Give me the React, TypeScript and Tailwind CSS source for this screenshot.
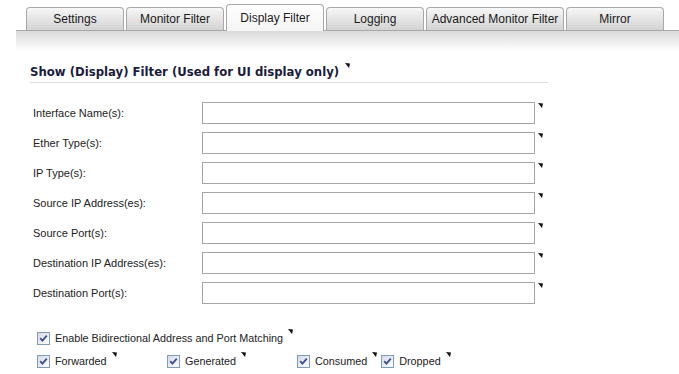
import React from "react";

const tabs = [
  { label: "Settings", w: "w-[98px]" },
  { label: "Monitor Filter", w: "w-[98px]" },
  { label: "Display Filter", w: "w-[98px]", active: true },
  { label: "Logging", w: "w-[98px]" },
  { label: "Advanced Monitor Filter", w: "w-[138px]" },
  { label: "Mirror", w: "w-[98px]" },
];

const fields = [
  "Interface Name(s):",
  "Ether Type(s):",
  "IP Type(s):",
  "Source IP Address(es):",
  "Source Port(s):",
  "Destination IP Address(es):",
  "Destination Port(s):",
];

function Tip({ className = "" }: { className?: string }) {
  return (
    <svg width="5" height="5" viewBox="0 0 5 5" className={className}>
      <polygon points="0,0 5,0.5 4,5" fill="#111" />
    </svg>
  );
}

function Check({ label, w }: { label: string; w?: string }) {
  return (
    <div className={`flex items-center h-[13px] ${w ?? ""}`}>
      <span className="w-[13px] h-[13px] border border-[#7f9db9] bg-gradient-to-br from-[#d6d9e6] to-white flex items-center justify-center">
        <svg width="9" height="9" viewBox="0 0 9 9">
          <path d="M1.2 4.2 L3.4 6.6 L7.8 1.6" stroke="#3f4d8f" strokeWidth="1.8" fill="none" />
        </svg>
      </span>
      <span className="ml-[5px] text-[10.8px] leading-[13px] text-[#222]">{label}</span>
      <Tip className="ml-[5px] self-start mt-[-3px]" />
    </div>
  );
}

export default function App() {
  return (
    <div className="w-[679px] h-[374px] bg-white overflow-hidden font-['Liberation_Sans',Arial,sans-serif]">
      <div className="ml-[16px] h-[31px] pl-[10px] flex items-end gap-[2px] border-b border-[#a8a8a8]">
        {tabs.map((t) =>
          t.active ? (
            <div
              key={t.label}
              className={`${t.w} h-[27px] -mb-px rounded-t-[4px] border border-b-0 border-[#a8a8a8] bg-gradient-to-b from-white to-[#f4f4f4] flex items-center justify-center text-[12px] text-[#1a1a1a] pb-[1px]`}
            >
              {t.label}
            </div>
          ) : (
            <div
              key={t.label}
              className={`${t.w} h-[23px] rounded-t-[4px] border border-b-0 border-[#a8a8a8] bg-gradient-to-b from-[#f7f7f7] to-[#d3d3d3] flex items-center justify-center text-[12px] text-[#1a1a1a]`}
            >
              {t.label}
            </div>
          )
        )}
      </div>
      <div className="ml-[16px] h-[20px] bg-gradient-to-b from-[#dadada] to-white" />

      <div className="ml-[30px] w-[518px] mt-[15px] pb-[3px] border-b border-[#dcdcdc] flex items-start">
        <span className="font-['DejaVu_Sans',Verdana,sans-serif] font-bold text-[11.7px] text-[#1b1b3a] leading-[13px]">
          Show (Display) Filter (Used for UI display only)
        </span>
        <Tip className="ml-[6px] mt-[-3px]" />
      </div>

      <div className="mt-[19px] flex flex-col gap-[8px]">
        {fields.map((f) => (
          <div key={f} className="flex items-start h-[22px]">
            <span className="w-[202px] pl-[33px] text-[11px] text-[#222] leading-[22px]">{f}</span>
            <input
              className="w-[333px] h-[22px] border border-[#a5a5a5] bg-white outline-none"
              readOnly
            />
            <Tip className="ml-[3px] mt-[1px]" />
          </div>
        ))}
      </div>

      <div className="ml-[37px] mt-[28px] flex flex-col gap-[10px]">
        <Check label="Enable Bidirectional Address and Port Matching" />
        <div className="flex">
          <Check label="Forwarded" w="w-[130px]" />
          <Check label="Generated" w="w-[130px]" />
          <Check label="Consumed" />
          <div className="ml-[4px]">
            <Check label="Dropped" />
          </div>
        </div>
      </div>
    </div>
  );
}
